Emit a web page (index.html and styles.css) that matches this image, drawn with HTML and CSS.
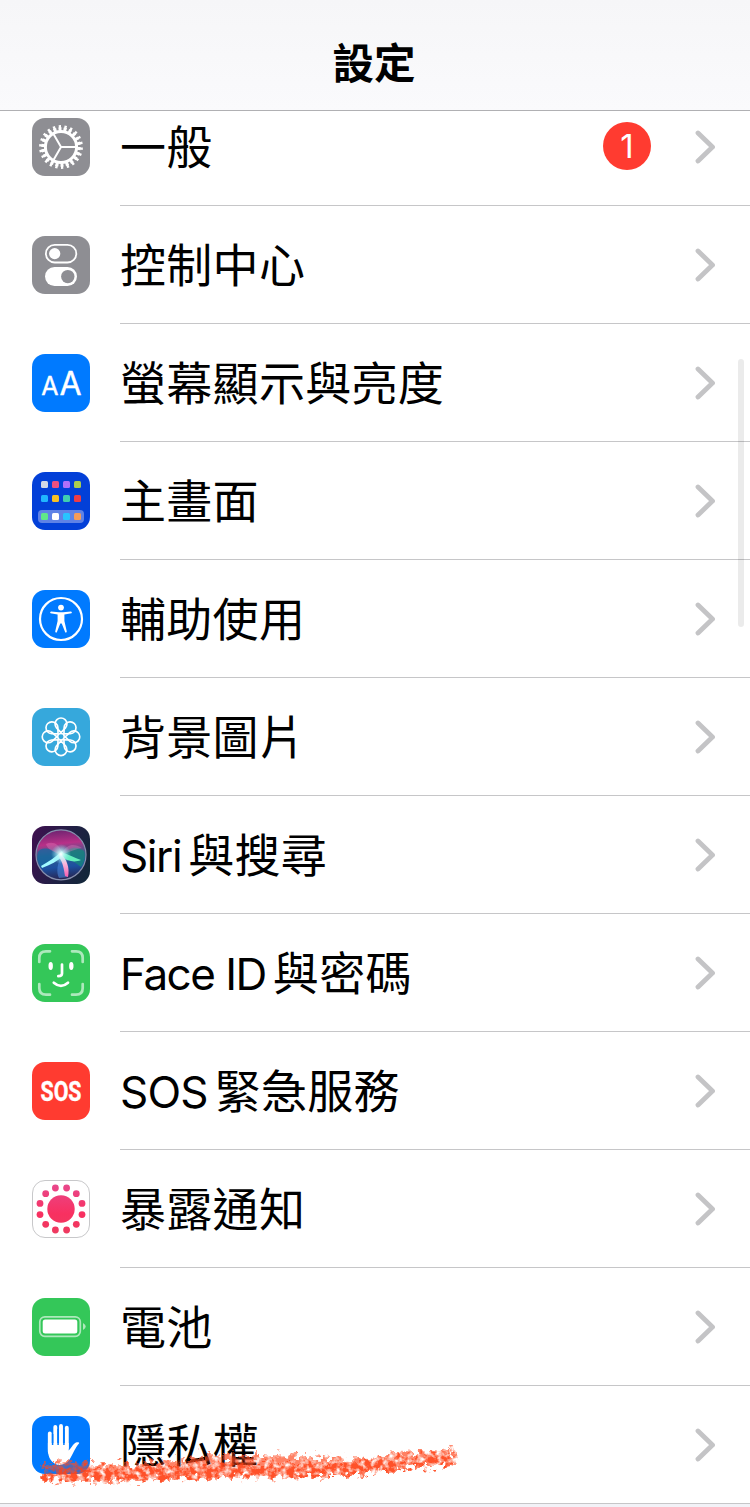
FILE: index.html
```html
<!DOCTYPE html>
<html lang="zh-Hant">
<head>
    <meta charset="UTF-8">
    <meta name="viewport" content="width=device-width, initial-scale=1.0">
    <title>設定</title>
    <link rel="stylesheet" href="styles.css">
</head>
<body>
    <!-- Shared shapes -->
    <svg class="defs" width="0" height="0">
        <symbol id="chevron" viewBox="0 0 20 34">
            <path d="M3 3L17.5 17L3 31" fill="none" stroke="#c4c4c6" stroke-width="4.8" stroke-linecap="round" stroke-linejoin="round"/>
        </symbol>
        <path id="petal" d="M0 -4L-4.3 -8.6A5.7 5.7 0 1 1 4.3 -8.6Z"/>
    </svg>

    <header class="navbar">
        <h1>設定</h1>
    </header>

    <!-- Settings list -->
    <ul class="list">
        <li class="row">
            <svg class="icon gray" viewBox="0 0 58 58">
                <g fill="none" stroke="#fff">
                    <circle cx="29" cy="29" r="15.6" stroke-width="3"/>
                    <circle cx="29" cy="29" r="18" stroke-width="3.4" pathLength="44" stroke-dasharray="1.2 0.8"/>
                    <circle cx="29" cy="29" r="20.3" stroke-width="3.2" pathLength="44" stroke-dasharray="0.8 1.2" stroke-dashoffset="-0.2"/>
                    <path d="M44 29H29L21.5 16M29 29L21.5 42" stroke-width="2"/>
                </g>
            </svg>
            <div class="content">
                <span class="label">一般</span>
                <span class="badge">1</span>
                <svg class="chevron"><use href="#chevron"/></svg>
            </div>
        </li>
        <li class="row">
            <svg class="icon gray" viewBox="0 0 58 58">
                <rect x="13.9" y="8.9" width="30.4" height="17.6" rx="8.8" fill="none" stroke="#fff" stroke-width="1.8"/>
                <circle cx="22.7" cy="17.6" r="5.6" fill="#fff"/>
                <rect x="13" y="31" width="32" height="19" rx="9.5" fill="#fff"/>
                <circle cx="35.8" cy="40.6" r="6.7" fill="#8e8e93"/>
            </svg>
            <div class="content">
                <span class="label">控制中心</span>
                <svg class="chevron"><use href="#chevron"/></svg>
            </div>
        </li>
        <li class="row">
            <svg class="icon blue" viewBox="0 0 58 58">
                <text class="glyph" x="9.3" y="41" font-size="25">A</text>
                <text class="glyph" x="27.4" y="41" font-size="32">A</text>
            </svg>
            <div class="content">
                <span class="label">螢幕顯示與亮度</span>
                <svg class="chevron"><use href="#chevron"/></svg>
            </div>
        </li>
        <li class="row">
            <svg class="icon navy" viewBox="0 0 58 58">
                <rect x="6" y="38" width="46" height="13" rx="4" fill="#5f82e6"/>
                <rect x="9" y="9" width="7" height="7" rx="1.5" fill="#d2d8e6"/>
                <rect x="20" y="9" width="7" height="7" rx="1.5" fill="#ee5080"/>
                <rect x="31" y="9" width="7" height="7" rx="1.5" fill="#b070fa"/>
                <rect x="42" y="9" width="7" height="7" rx="1.5" fill="#aace50"/>
                <rect x="9" y="23" width="7" height="7" rx="1.5" fill="#20b6ff"/>
                <rect x="20" y="23" width="7" height="7" rx="1.5" fill="#f8c024"/>
                <rect x="31" y="23" width="7" height="7" rx="1.5" fill="#40ceb0"/>
                <rect x="42" y="23" width="7" height="7" rx="1.5" fill="#ee3c46"/>
                <rect x="9" y="41" width="7" height="7" rx="1.5" fill="#60e888"/>
                <rect x="20" y="41" width="7" height="7" rx="1.5" fill="#fff"/>
                <rect x="31" y="41" width="7" height="7" rx="1.5" fill="#28c4ff"/>
                <rect x="42" y="41" width="7" height="7" rx="1.5" fill="#f69c58"/>
            </svg>
            <div class="content">
                <span class="label">主畫面</span>
                <svg class="chevron"><use href="#chevron"/></svg>
            </div>
        </li>
        <li class="row">
            <svg class="icon blue" viewBox="0 0 58 58">
                <circle cx="29" cy="29" r="21" fill="none" stroke="#fff" stroke-width="2.2"/>
                <circle cx="29" cy="17.6" r="2.9" fill="#fff"/>
                <path d="M19 21.4L27 22.2H31L39 21.4Q40.6 21.8 39.5 23.2L32.4 24.6V31L34.8 41.5Q34.4 43.3 33.2 42.3L29.7 33.5H28.3L24.8 42.3Q23.6 43.3 23.2 41.5L25.6 31V24.6L18.5 23.2Q17.4 21.8 19 21.4Z" fill="#fff"/>
            </svg>
            <div class="content">
                <span class="label">輔助使用</span>
                <svg class="chevron"><use href="#chevron"/></svg>
            </div>
        </li>
        <li class="row">
            <svg class="icon sky" viewBox="0 0 58 58">
                <g transform="translate(29 28.8) scale(1.04)" fill="none" stroke="#fff" stroke-width="1.6">
                    <circle r="3.2"/>
                    <use href="#petal"/>
                    <use href="#petal" transform="rotate(45)"/>
                    <use href="#petal" transform="rotate(90)"/>
                    <use href="#petal" transform="rotate(135)"/>
                    <use href="#petal" transform="rotate(180)"/>
                    <use href="#petal" transform="rotate(225)"/>
                    <use href="#petal" transform="rotate(270)"/>
                    <use href="#petal" transform="rotate(315)"/>
                </g>
            </svg>
            <div class="content">
                <span class="label">背景圖片</span>
                <svg class="chevron"><use href="#chevron"/></svg>
            </div>
        </li>
        <li class="row">
            <svg class="icon siri" viewBox="0 0 58 58">
                <defs>
                    <linearGradient id="orb" x1="0.4" y1="0" x2="0.5" y2="1">
                        <stop offset="0" stop-color="#6c2470"/>
                        <stop offset="0.28" stop-color="#b83088"/>
                        <stop offset="0.5" stop-color="#36608c"/>
                        <stop offset="0.75" stop-color="#1c50a0"/>
                        <stop offset="1" stop-color="#28234e"/>
                    </linearGradient>
                    <radialGradient id="glow">
                        <stop offset="0" stop-color="#fff"/>
                        <stop offset="0.3" stop-color="#c8fafa" stop-opacity="0.8"/>
                        <stop offset="1" stop-color="#80e0f0" stop-opacity="0"/>
                    </radialGradient>
                    <linearGradient id="tail" x1="0" y1="0" x2="0" y2="1">
                        <stop offset="0" stop-color="#fff"/>
                        <stop offset="1" stop-color="#f45cae"/>
                    </linearGradient>
                </defs>
                <circle cx="29" cy="28.8" r="25" fill="url(#orb)" stroke="#8790ae" stroke-width="1.2"/>
                <path d="M31 29C38 20 46 20 52 25C54 31 52 37 49 41C45 38 37 32 31 29Z" fill="#14877c" opacity="0.75"/>
                <path d="M28 30C20 22 10 20 6 26C5 32 6 37 9 41Z" fill="#1668a0" opacity="0.75"/>
                <path d="M29 29C22 26 15 23 14 18C20 15 27 17 30 27C35 18 42 17 50 22C44 23 37 26 29 29Z" fill="#e880c0" opacity="0.35"/>
                <path d="M30 28C25 38 24 46 27 52L36 51C36 42 35 34 30 28Z" fill="#4a86d8" opacity="0.6"/>
                <path d="M30 25C24 31 16 36 9 40L10 42C18 39 26 35 32 29Z" fill="#a2faff"/>
                <path d="M28 26C36 28 43 32 49 34C42 37 36 35 29 31Z" fill="#64efbc"/>
                <path d="M28 27C35 33 38 42 36 51L33 50C32 43 31 37 27 31Z" fill="url(#tail)"/>
                <circle cx="29" cy="28" r="10" fill="url(#glow)"/>
            </svg>
            <div class="content">
                <span class="label"><span class="latin">Siri</span>與搜尋</span>
                <svg class="chevron"><use href="#chevron"/></svg>
            </div>
        </li>
        <li class="row">
            <svg class="icon green" viewBox="0 0 58 58">
                <g fill="none" stroke="#fff" stroke-width="2.7" stroke-linecap="round">
                    <path opacity="0.6" d="M7.3 18V14Q7.3 7.3 14 7.3H18M40 7.3H44Q50.7 7.3 50.7 14V18M50.7 40V44Q50.7 50.7 44 50.7H40M18 50.7H14Q7.3 50.7 7.3 44V40"/>
                    <path d="M30 20.5V29.5Q30 32.2 26.3 32.2"/>
                    <path d="M21.8 38.7Q29 45 36 38.7"/>
                </g>
                <ellipse cx="18.7" cy="22" rx="2.2" ry="3.9" fill="#fff"/>
                <ellipse cx="39.3" cy="22" rx="2.2" ry="3.9" fill="#fff"/>
            </svg>
            <div class="content">
                <span class="label"><span class="latin face">Face ID</span>與密碼</span>
                <svg class="chevron"><use href="#chevron"/></svg>
            </div>
        </li>
        <li class="row">
            <svg class="icon red" viewBox="0 0 58 58">
                <text class="glyph bold" x="8.5" y="38.6" font-size="27" textLength="41" lengthAdjust="spacingAndGlyphs">SOS</text>
            </svg>
            <div class="content">
                <span class="label"><span class="latin sos">SOS</span>緊急服務</span>
                <svg class="chevron"><use href="#chevron"/></svg>
            </div>
        </li>
        <li class="row">
            <svg class="icon" viewBox="0 0 58 58">
                <defs>
                    <linearGradient id="pink" gradientUnits="userSpaceOnUse" x1="0" y1="4" x2="0" y2="54">
                        <stop offset="0" stop-color="#e8488c"/>
                        <stop offset="0.6" stop-color="#f83060"/>
                        <stop offset="1" stop-color="#ee3a60"/>
                    </linearGradient>
                </defs>
                <rect x="0.5" y="0.5" width="57" height="57" rx="12.5" fill="#fff" stroke="#c8c8ca"/>
                <circle cx="29" cy="29" r="13.7" fill="url(#pink)"/>
                <g fill="url(#pink)">
                    <circle cx="34.6" cy="8" r="3.4"/>
                    <circle cx="44.3" cy="13.7" r="3.4"/>
                    <circle cx="50" cy="23.4" r="3.4"/>
                    <circle cx="50" cy="34.6" r="3.4"/>
                    <circle cx="44.3" cy="44.3" r="3.4"/>
                    <circle cx="34.6" cy="50" r="3.4"/>
                    <circle cx="23.4" cy="50" r="3.4"/>
                    <circle cx="13.7" cy="44.3" r="3.4"/>
                    <circle cx="8" cy="34.6" r="3.4"/>
                    <circle cx="8" cy="23.4" r="3.4"/>
                    <circle cx="13.7" cy="13.7" r="3.4"/>
                    <circle cx="23.4" cy="8" r="3.4"/>
                </g>
            </svg>
            <div class="content">
                <span class="label">暴露通知</span>
                <svg class="chevron"><use href="#chevron"/></svg>
            </div>
        </li>
        <li class="row">
            <svg class="icon green" viewBox="0 0 58 58">
                <rect x="7.8" y="18.8" width="40.5" height="19.5" rx="5" fill="none" stroke="#fff" stroke-width="1.7" opacity="0.6"/>
                <rect x="10.7" y="21.5" width="34.6" height="14" rx="2.5" fill="#fff"/>
                <path d="M51 25Q56.5 28.5 51 32Z" fill="#fff" opacity="0.6"/>
            </svg>
            <div class="content">
                <span class="label">電池</span>
                <svg class="chevron"><use href="#chevron"/></svg>
            </div>
        </li>
        <li class="row last">
            <svg class="icon blue" viewBox="0 0 58 58">
                <g stroke="#fff" stroke-width="3.9" stroke-linecap="round">
                    <path d="M17.8 17.5V36M23.3 11V32M29 10V32M34.8 11.8V32"/>
                </g>
                <path d="M15.9 27H36.7V34.5C40 31 41.5 27.5 44 26.5C46 25.7 48 26.5 47 27.5C43.5 31 41 38 37.5 43.5C34 48.8 28 50 23.5 48C17.5 45 15.9 39 15.9 33Z" fill="#fff"/>
                <path d="M20.6 18V29M26.1 13V29M31.9 13V29" stroke="#007aff" stroke-width="1.5"/>
            </svg>
            <div class="content">
                <span class="label">隱私權</span>
                <svg class="chevron"><use href="#chevron"/></svg>
            </div>
            <!-- Crayon mark drawn over the row -->
            <svg class="crayon" viewBox="0 0 440 60">
                <filter id="rough" x="-5%" y="-40%" width="110%" height="180%" color-interpolation-filters="sRGB">
                    <feTurbulence type="fractalNoise" baseFrequency="0.17" numOctaves="3" seed="4" result="noise"/>
                    <feDisplacementMap in="SourceGraphic" in2="noise" scale="20" xChannelSelector="R" yChannelSelector="G" result="edge"/>
                    <feColorMatrix in="noise" type="matrix" values="0 0 0 0 0  0 0 0 0 0  0 0 0 0 0  0 0 2.4 0 -0.4" result="grain"/>
                    <feComposite in="edge" in2="grain" operator="in"/>
                    <feGaussianBlur stdDeviation="0.5"/>
                </filter>
                <g filter="url(#rough)">
                    <path d="M12 33L30 26L60 29L100 31L130 28L160 24L190 21L240 21L300 23L340 25L365 19L400 17L424 12L426 29L400 32L340 39L290 43L200 44L130 46L80 48L50 48L14 47Z" fill="#ff4b22" opacity="0.7"/>
                    <path d="M16 40L75 40L150 38L220 36L310 36L365 30L422 25" fill="none" stroke="#ff4216" stroke-width="12" opacity="0.75"/>
                </g>
            </svg>
        </li>
    </ul>

    <div class="scrollbar"></div>
</body>
</html>
```
FILE: styles.css
```css
* {
    box-sizing: border-box;
}

body {
    position: relative;
    margin: 0;
    height: 1507px;
    overflow: hidden;
    background-color: #f2f2f7;
    color: #000;
    font-family: "Noto Sans CJK TC", sans-serif;
}

.defs {
    position: absolute;
}

/* Navigation bar */
.navbar {
    position: relative;
    z-index: 1;
    display: flex;
    justify-content: center;
    height: 111px;
    padding: 31px 2px 0 0;
    background: linear-gradient(#f6f6f8, #fafafc);
    border-bottom: 1px solid #b0b0b3;
}

.navbar h1 {
    margin: 0;
    font-size: 41.5px;
    font-weight: 700;
    line-height: 60px;
}

/* The first row is scrolled partly under the bar */
.list {
    margin: -23px 0 0;
    padding: 0;
    list-style: none;
    background-color: #fff;
}

.row {
    position: relative;
    display: flex;
    align-items: center;
    height: 118px;
    padding-left: 32px;
}

.row.last {
    border-bottom: 1px solid #c6c6c8;
}

.icon {
    width: 58px;
    height: 58px;
    margin-right: 30px;
    border-radius: 13px;
    flex-shrink: 0;
    overflow: visible;
}

.gray {
    background-color: #8e8e93;
}

.blue {
    background-color: #007aff;
}

.navy {
    background-color: #0340d8;
}

.sky {
    background-color: #36a8dc;
}

.siri {
    background: linear-gradient(110deg, #401050, #202044 55%, #102838);
}

.green {
    background-color: #34c759;
}

.red {
    background-color: #ff3b30;
}

.glyph {
    font-family: Inter, sans-serif;
    fill: #fff;
    stroke: #fff;
    stroke-width: 0.4px;
    stroke-linejoin: round;
}

.bold {
    font-family: Roboto, sans-serif;
    font-weight: 700;
}

.content {
    display: flex;
    align-items: center;
    flex: 1;
    height: 118px;
    padding-right: 35px;
    border-bottom: 1px solid #c6c6c8;
}

.last .content {
    height: 117px;
    border-bottom: none;
}

.label {
    flex: 1;
    height: 66px;
    font-size: 46px;
    line-height: 60px;
    letter-spacing: 0.3px;
    white-space: nowrap;
}

.latin {
    margin-right: 7px;
    font-family: Inter, sans-serif;
    font-size: 44px;
    line-height: 1;
    letter-spacing: -1.4px;
}

.face {
    letter-spacing: -1.5px;
}

.sos {
    letter-spacing: -0.8px;
}

.badge {
    width: 48px;
    height: 48px;
    margin: -2px 44px 0 0;
    border-radius: 50%;
    background-color: #ff3b30;
    color: #fff;
    font-family: Inter, sans-serif;
    font-size: 33px;
    line-height: 48px;
    text-align: center;
}

.chevron {
    width: 20px;
    height: 34px;
}

.crayon {
    position: absolute;
    left: 30px;
    top: 48px;
    width: 440px;
    height: 60px;
}

.scrollbar {
    position: absolute;
    top: 359px;
    right: 6px;
    width: 6px;
    height: 268px;
    border-radius: 3px;
    background-color: rgba(0, 0, 0, 0.08);
}
```
